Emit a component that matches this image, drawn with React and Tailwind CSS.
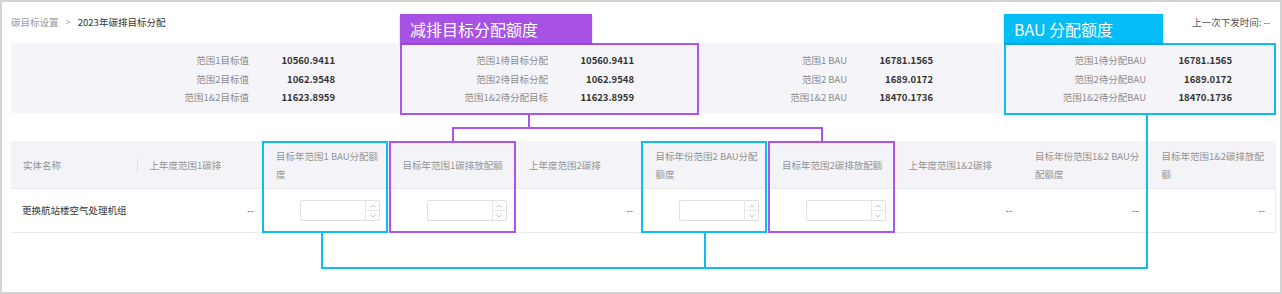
import React from "react";

const SUMMARY = [
  [
    ["范围1目标值", "10560.9411"],
    ["范围2目标值", "1062.9548"],
    ["范围1&2目标值", "11623.8959"],
  ],
  [
    ["范围1待目标分配", "10560.9411"],
    ["范围2待目标分配", "1062.9548"],
    ["范围1&2待分配目标", "11623.8959"],
  ],
  [
    ["范围1 BAU", "16781.1565"],
    ["范围2 BAU", "1689.0172"],
    ["范围1&2 BAU", "18470.1736"],
  ],
  [
    ["范围1待分配BAU", "16781.1565"],
    ["范围2待分配BAU", "1689.0172"],
    ["范围1&2待分配BAU", "18470.1736"],
  ],
];

// header lines are split by hand so wrapping matches the picture
const COLUMNS = [
  { lines: ["实体名称"], cell: "name" },
  { lines: ["上年度范围1碳排"], cell: "dash" },
  { lines: ["目标年范围1 BAU分配额", "度"], cell: "input" },
  { lines: ["目标年范围1碳排放配额"], cell: "input" },
  { lines: ["上年度范围2碳排"], cell: "dash" },
  { lines: ["目标年份范围2 BAU分配", "额度"], cell: "input" },
  { lines: ["目标年范围2碳排放配额"], cell: "input" },
  { lines: ["上年度范围1&2碳排"], cell: "dash" },
  { lines: ["目标年份范围1&2 BAU分", "配额度"], cell: "dash" },
  { lines: ["目标年范围1&2碳排放配", "额"], cell: "dash" },
];

function NumberInput() {
  return (
    <div className="flex h-[21px] w-[80px] rounded-[2px] border border-[#dedee3] bg-white">
      <div className="flex-1" />
      <div className="flex w-[14px] flex-col border-l border-[#e6e6ea]">
        <div className="flex flex-1 items-center justify-center border-b border-[#e6e6ea]">
          <svg width="6" height="4" viewBox="0 0 6 4">
            <path d="M0.5 3.5 L3 1 L5.5 3.5" fill="none" stroke="#b5b5bd" strokeWidth="0.8" />
          </svg>
        </div>
        <div className="flex flex-1 items-center justify-center">
          <svg width="6" height="4" viewBox="0 0 6 4">
            <path d="M0.5 0.5 L3 3 L5.5 0.5" fill="none" stroke="#b5b5bd" strokeWidth="0.8" />
          </svg>
        </div>
      </div>
    </div>
  );
}

function Annotations() {
  const purple = "#a955ee";
  const blue = "#0dbcf4";
  return (
    <>
      <svg
        className="pointer-events-none absolute left-0 top-0"
        width="1282"
        height="294"
        viewBox="0 0 1282 294"
      >
        <g fill="none" stroke={purple} strokeWidth="2">
          <rect x="401" y="44" width="297" height="70" />
          <rect x="390" y="142" width="125" height="90" />
          <rect x="769" y="142" width="125" height="90" />
          <path d="M529 115 V128 M453 141 V128 H822 V141" />
        </g>
        <g fill="none" stroke={blue} strokeWidth="2">
          <rect x="1005" y="44" width="270" height="70" />
          <rect x="263" y="142" width="124" height="90" />
          <rect x="642" y="142" width="124" height="90" />
          <path d="M322 233 V268 H1147 V115 M705 233 V268" />
        </g>
      </svg>
      <div className="absolute left-[400px] top-[14px] flex h-[29px] w-[192px] items-center bg-[#a752e4] pl-[10px] text-[16px] text-white shadow-[0_1px_2px_rgba(0,0,0,0.25)]">
        减排目标分配额度
      </div>
      <div className="absolute left-[1004px] top-[14px] flex h-[29px] w-[159px] items-center bg-[#04bdf6] pl-[10px] text-[16px] text-white shadow-[0_1px_2px_rgba(0,0,0,0.25)]">
        BAU 分配额度
      </div>
    </>
  );
}

export default function App() {
  return (
    <div className="relative h-[294px] w-[1282px] bg-white font-['Noto_Sans_CJK_SC','Noto_Sans',sans-serif] text-[9.5px]">
      <div className="h-full border-2 border-[#d3d3d3] pl-[9px] pr-[4px]">
        <div className="flex h-[41px] items-center justify-between pr-[6px]">
          <div className="flex items-center gap-[7px]">
            <span className="text-[#9a9a9a]">碳目标设置</span>
            <span className="text-[#aaaaaa]">&gt;</span>
            <span className="text-[#333333]">2023年碳排目标分配</span>
          </div>
          <div className="text-[#555555]">上一次下发时间: --</div>
        </div>

        <div className="grid h-[70px] grid-cols-[299px_299px_299px_299px] bg-[#f5f5f9] pl-[25px] pt-[8px]">
          {SUMMARY.map((col, ci) => (
            <div key={ci}>
              {col.map(([label, value]) => (
                <div key={label} className="flex leading-[18.5px]">
                  <div className="w-[213px] text-right text-[#8c8c8c]">{label}</div>
                  <div className="w-[86px] text-right font-semibold text-[#333333]">{value}</div>
                </div>
              ))}
            </div>
          ))}
        </div>

        <div className="mt-[28px] w-[1265px]">
          <div className="grid h-[48px] grid-cols-10 border-b border-[#e9e9ee] bg-[#f4f4f8]">
            {COLUMNS.map((c, i) => (
              <div
                key={i}
                className="relative flex flex-col justify-center pl-[12px] leading-[18px] whitespace-nowrap text-[#939393]"
              >
                {c.lines.map((l) => (
                  <span key={l}>{l}</span>
                ))}
                {i === 0 && (
                  <div className="absolute right-0 top-[17px] h-[15px] w-px bg-[#e2e2e6]" />
                )}
              </div>
            ))}
          </div>
          <div className="grid h-[44px] grid-cols-10 border-b border-r border-[#ececf0]">
            {COLUMNS.map((c, i) => (
              <div
                key={i}
                className={
                  c.cell === "name"
                    ? "flex items-center pl-[11px] whitespace-nowrap text-[#333333]"
                    : "flex items-center justify-end pr-[10px] text-[#555555]"
                }
              >
                {c.cell === "name" && "更换航站楼空气处理机组"}
                {c.cell === "dash" && "--"}
                {c.cell === "input" && <NumberInput />}
              </div>
            ))}
          </div>
        </div>
      </div>
      <Annotations />
    </div>
  );
}
